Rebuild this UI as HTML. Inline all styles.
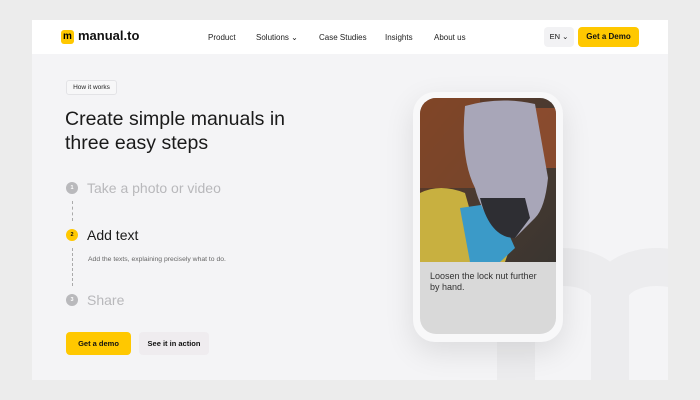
<!DOCTYPE html>
<html><head><style>
*{margin:0;padding:0;box-sizing:border-box}
body{width:700px;height:400px;background:#ececec;font-family:"Liberation Sans",sans-serif;position:relative;overflow:hidden}
.page{position:absolute;left:32px;top:20px;width:636px;height:360px;background:#f4f4f6;overflow:hidden}
.hdr{position:absolute;left:0;top:0;width:636px;height:34px;background:#fff}
.abs{position:absolute}
.nav{font-size:8px;color:#222;top:13px}
.btn{position:absolute;border-radius:4px;font-size:8px;font-weight:bold;color:#111;text-align:center}
.num{position:absolute;width:12px;height:12px;border-radius:50%;font-size:5.5px;color:#fff;text-align:center;line-height:12px;font-weight:bold}
.dash{position:absolute;left:40px;width:0;border-left:1px dashed #aaa}
</style></head><body>
<div class="page">
<svg class="abs" style="left:0;top:0" width="636" height="360">
<path d="M484 360 V275 A47 28 0 0 1 578 275 V360 M578 275 A47 28 0 0 1 672 275 V360" fill="none" stroke="#ececee" stroke-width="38"/>
</svg>
<div class="hdr">
 <div class="abs" style="left:29px;top:10px;width:13px;height:14px;background:#ffc800;border-radius:3px;font-size:10px;font-weight:bold;text-align:center;line-height:13px">m</div>
 <div class="abs" style="left:46px;top:8px;font-size:13px;font-weight:bold;color:#111">manual.to</div>
 <div class="abs nav" style="left:176px">Product</div>
 <div class="abs nav" style="left:224px">Solutions ⌄</div>
 <div class="abs nav" style="left:287px">Case Studies</div>
 <div class="abs nav" style="left:353px">Insights</div>
 <div class="abs nav" style="left:402px">About us</div>
 <div class="btn" style="left:512px;top:7px;width:30px;height:20px;background:#f2f2f4;font-weight:normal;line-height:20px;font-size:7.5px">EN ⌄</div>
 <div class="btn" style="left:546px;top:7px;width:61px;height:20px;background:#ffc800;line-height:20px">Get a Demo</div>
</div>
<div class="abs" style="left:34px;top:60px;width:51px;height:15px;border:1px solid #e3e3e6;border-radius:3px;background:#f7f7f8;font-size:6.5px;line-height:13px;text-align:center;color:#222">How it works</div>
<div class="abs" style="left:33px;top:87px;font-size:19.5px;line-height:24px;color:#1a1a1a">Create simple manuals in<br>three easy steps</div>
<div class="num" style="left:34px;top:162px;background:#b9b9bc">1</div>
<div class="abs" style="left:55px;top:160px;font-size:14px;color:#b8b8bb">Take a photo or video</div>
<div class="dash" style="top:181px;height:20px"></div>
<div class="num" style="left:34px;top:209px;background:#ffc800;color:#111">2</div>
<div class="abs" style="left:55px;top:207px;font-size:14px;color:#1a1a1a">Add text</div>
<div class="dash" style="top:228px;height:38px"></div>
<div class="abs" style="left:56px;top:236px;font-size:6.8px;color:#666">Add the texts, explaining precisely what to do.</div>
<div class="num" style="left:34px;top:274px;background:#b9b9bc">3</div>
<div class="abs" style="left:55px;top:272px;font-size:14px;color:#b8b8bb">Share</div>
<div class="btn" style="left:34px;top:312px;width:65px;height:23px;background:#ffc800;line-height:23px;font-size:7.5px">Get a demo</div>
<div class="btn" style="left:107px;top:312px;width:70px;height:23px;background:#efecef;line-height:23px;font-size:7.5px">See it in action</div>
<div class="abs" style="left:381px;top:72px;width:150px;height:250px;border-radius:22px;background:#f8f8f9;box-shadow:0 10px 30px rgba(0,0,0,0.10)"></div>
<div class="abs" style="left:388px;top:78px;width:136px;height:236px;border-radius:16px;background:#d9d9d9;overflow:hidden">
 <svg width="136" height="164" style="display:block">
  <defs><linearGradient id="bg" x1="0" y1="0" x2="1" y2="1"><stop offset="0" stop-color="#6b3a22"/><stop offset="0.5" stop-color="#4a3a30"/><stop offset="1" stop-color="#3a3530"/></linearGradient></defs>
  <rect width="136" height="164" fill="url(#bg)"/>
  <rect x="0" y="0" width="60" height="90" fill="#8a4a2a" opacity="0.7"/>
  <rect x="100" y="10" width="36" height="60" fill="#a5522e" opacity="0.7"/>
  <path d="M0 95 Q20 85 45 95 L55 130 L90 150 L85 164 L0 164Z" fill="#c8b040"/>
  <path d="M40 110 L75 105 L95 150 L80 164 L50 164 Z" fill="#3b9ac8"/>
  <path d="M45 8 Q80 -2 115 6 L128 80 Q125 110 115 120 L95 140 L75 130 Q60 110 55 90 Q40 60 45 8Z" fill="#a8a6b8"/>
  <path d="M60 100 Q70 140 95 140 L110 120 L105 100 Z" fill="#2e2e33"/>
 </svg>
 <div style="padding:9px 10px;font-size:9px;line-height:11px;color:#333">Loosen the lock nut further by hand.</div>
</div>
</div>
</body></html>
